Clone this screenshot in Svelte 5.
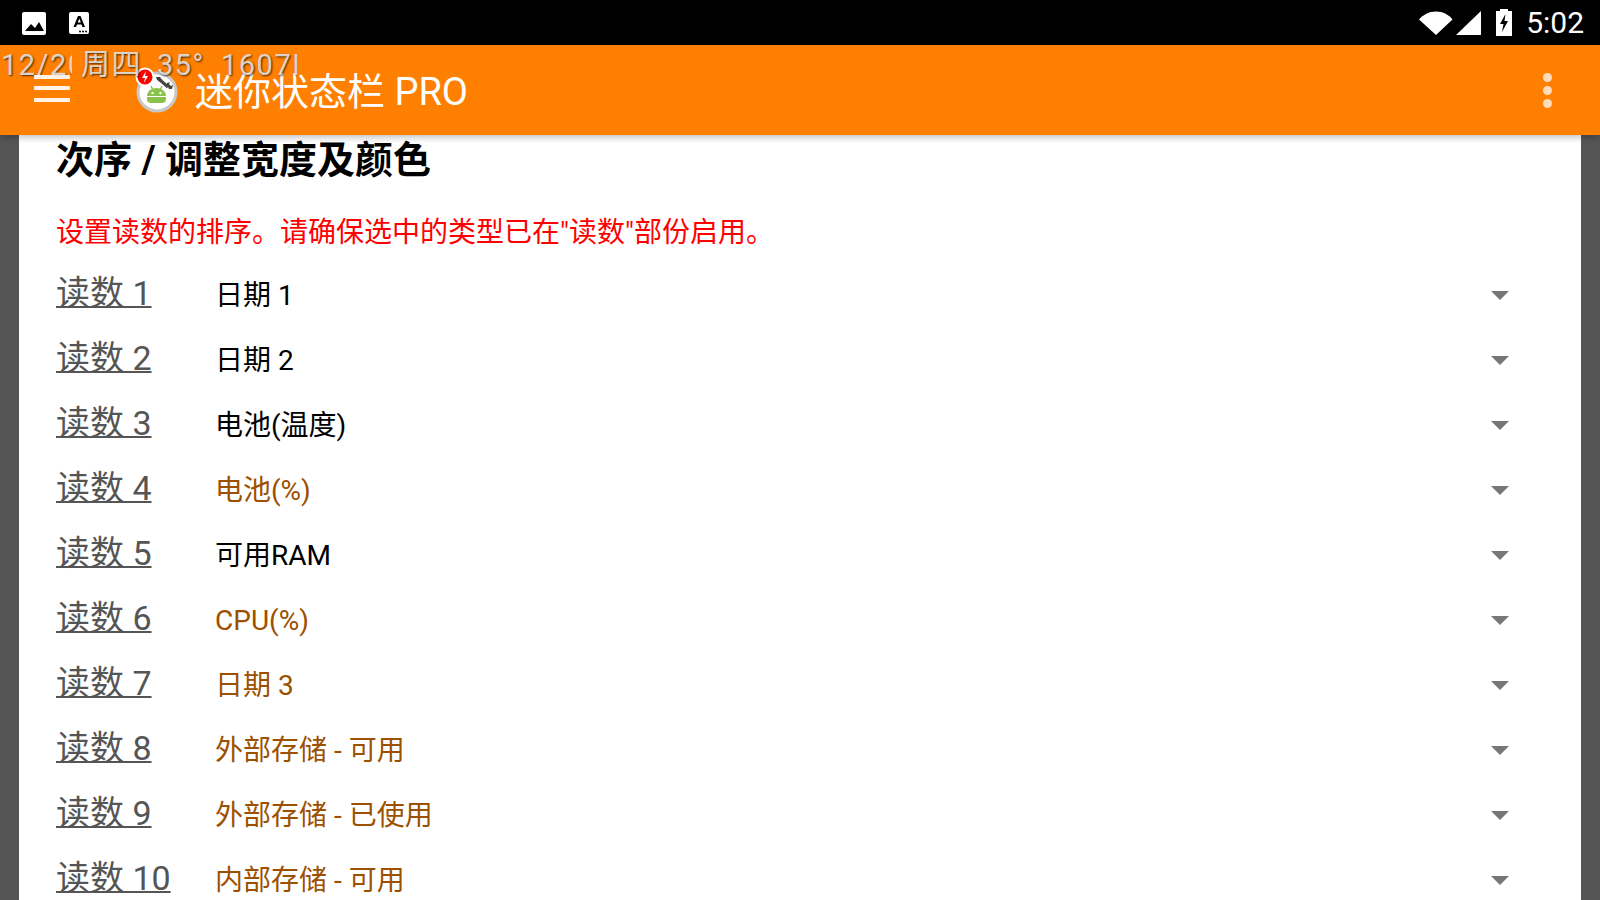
<script>
	const rows = [
		{ label: '读数 1', value: '日期 1', on: true },
		{ label: '读数 2', value: '日期 2', on: true },
		{ label: '读数 3', value: '电池(温度)', on: true },
		{ label: '读数 4', value: '电池(%)', on: false },
		{ label: '读数 5', value: '可用RAM', on: true },
		{ label: '读数 6', value: 'CPU(%)', on: false },
		{ label: '读数 7', value: '日期 3', on: false },
		{ label: '读数 8', value: '外部存储 - 可用', on: false },
		{ label: '读数 9', value: '外部存储 - 已使用', on: false },
		{ label: '读数 10', value: '内部存储 - 可用', on: false }
	];
	const readings = [
		{ text: '12/20', width: 71, gap: 0 },
		{ text: '周四', width: 76, gap: 9 },
		{ text: '35°', width: 64, gap: 0 },
		{ text: '1607K', width: 76, gap: 0 }
	];
</script>

<main class="page">
	<div class="statusbar">
		<div class="notifs">
			<svg width="26" height="24" viewBox="0 0 26 24">
				<rect x="1" y="1" width="24" height="23" rx="2" fill="#fff" />
				<path d="M4 20l6-7 4 4 4-6 5 9z" fill="#000" />
			</svg>
			<svg width="22" height="24" viewBox="0 0 22 24">
				<rect x="1" y="1" width="20" height="22" rx="2" fill="#fff" />
				<path d="M5.500 16L10 5h2.500L17 16h-2.600l-.9-2.500H9L8.100 16zM9.800 11.500h3L11.300 7.500z" fill="#000" />
				<circle cx="12" cy="20.500" r="1" fill="#000" /><circle cx="15" cy="20.500" r="1" fill="#000" /><circle cx="18" cy="20.500" r="1" fill="#000" />
			</svg>
		</div>
		<div class="sysicons">
			<svg class="wifi" width="34" height="26" viewBox="0 0 34 26">
				<path d="M0 9.500C4 5 10 1.500 17 1.500S30 5 33.500 9.500L17 25z" fill="#fff" />
			</svg>
			<svg class="signal" width="26" height="26" viewBox="0 0 26 26">
				<path d="M0 25L25 1v24z" fill="#fff" />
			</svg>
			<svg class="battery" width="18" height="27" viewBox="0 0 18 27">
				<path d="M5 0h8v2h4v25H1V2h4z" fill="#fff" />
				<path d="M10.500 5L5 15h3.500L7 23l6-11H9.500z" fill="#000" />
			</svg>
			<span class="clock">5:02</span>
		</div>
	</div>

	<header class="toolbar">
		<div class="readings">
			{#each readings as r}
				<span class="reading" style="width: {r.width}px; margin-left: {r.gap}px">{r.text}</span>
			{/each}
		</div>
		<button class="menu" aria-label="menu">
			<span></span><span></span><span></span>
		</button>
		<svg class="logo" width="46" height="52" viewBox="0 0 46 52">
			<circle cx="25" cy="29" r="19" fill="#fff" stroke="#c8c8c8" stroke-width="3" />
			<path d="M15 33a9.500 8 0 0 1 19 0z" fill="#8bc34a" />
			<path d="M15 34h19v3a4 4 0 0 1-4 3H19a4 4 0 0 1-4-3z" fill="#8bc34a" />
			<path d="M19 23l2 4M30 23l-2 4" stroke="#8bc34a" stroke-width="1.500" />
			<circle cx="20.500" cy="30" r="1.200" fill="#fff" /><circle cx="28.500" cy="30" r="1.200" fill="#fff" />
			<path d="M28 17l8 7" stroke="#444" stroke-width="3" />
			<path d="M35 22l2 4 3 0 1-4-2 1-2-2 1-2-3 1z" fill="#444" />
			<path d="M24 14l4 0 2 3-2 2-3-2z" fill="#444" />
			<circle cx="13" cy="14" r="8.500" fill="#f00" stroke="#fff" stroke-width="2" />
			<path d="M14 8l-4 7h3l-1 5 4-7h-3z" fill="#fff" />
		</svg>
		<h1>迷你状态栏 PRO</h1>
		<div class="more"><i></i><i></i><i></i></div>
	</header>

	<section class="card">
		<h2>次序 / 调整宽度及颜色</h2>
		<p class="note">设置读数的排序。请确保选中的类型已在"读数"部份启用。</p>
		{#each rows as row}
			<div class="row">
				<span class="label">{row.label}</span>
				<span class="value" class:off={!row.on}>{row.value}</span>
				<span class="arrow"></span>
			</div>
		{/each}
	</section>
</main>

<style>
	:global(body) {
		margin: 0;
	}

	.page {
		width: 1600px;
		height: 900px;
		overflow: hidden;
		background: #555;
		font-family: Roboto, "Noto Sans CJK SC", sans-serif;
		display: flex;
		flex-direction: column;
	}

	.statusbar {
		height: 45px;
		flex: none;
		background: #000;
		display: flex;
		align-items: center;
		justify-content: space-between;
		padding: 0 16px 0 21px;
	}

	.notifs {
		display: flex;
		gap: 21px;
		align-items: center;
	}

	.sysicons {
		display: flex;
		align-items: center;
	}

	.signal {
		margin-left: 3px;
	}

	.battery {
		margin-left: 13px;
	}

	.clock {
		margin-left: 13px;
		color: #fff;
		font-size: 30px;
	}

	.toolbar {
		height: 90px;
		flex: none;
		position: relative;
		z-index: 2;
		background: #ff8000;
		display: flex;
		align-items: center;
		box-sizing: border-box;
		box-shadow: 0 3px 6px rgba(0, 0, 0, 0.22);
	}

	.readings {
		position: absolute;
		left: 1px;
		top: 3px;
		display: flex;
	}

	.reading {
		overflow: hidden;
		white-space: nowrap;
		font-size: 29px;
		line-height: 34px;
		letter-spacing: 1.500px;
		color: rgba(235, 235, 235, 0.85);
		text-shadow: 1px 1px 2px rgba(0, 0, 0, 0.7);
	}

	.menu {
		width: 36px;
		height: 27px;
		margin-left: 34px;
		margin-top: -4px;
		padding: 0;
		border: none;
		background: none;
		display: flex;
		flex-direction: column;
		justify-content: space-between;
	}

	.menu span {
		height: 4px;
		background: #fff;
		opacity: 0.9;
	}

	.logo {
		margin-left: 62px;
		margin-top: -2px;
	}

	h1 {
		margin: -4px 0 0 17px;
		font-size: 38px;
		font-weight: 400;
		color: #fff;
	}

	.more {
		position: absolute;
		right: 48px;
		top: 28px;
		display: flex;
		flex-direction: column;
		gap: 4px;
	}

	.more i {
		width: 9px;
		height: 9px;
		border-radius: 50%;
		background: #ffdcbc;
	}

	.card {
		flex: 1;
		margin: 0 19px;
		padding: 0 37px;
		background: #fff;
	}

	h2 {
		margin: 0;
		padding-top: 1px;
		font-size: 38px;
		line-height: 48px;
		font-weight: 700;
		color: #000;
	}

	.note {
		margin: 30px 0 8px;
		font-size: 28px;
		line-height: 38px;
		color: #f00;
	}

	.row {
		height: 65px;
		display: flex;
		align-items: center;
	}

	.label {
		width: 159px;
		flex: none;
		margin-bottom: 4px;
		font-size: 34px;
		color: #555;
		text-decoration: underline;
		text-decoration-thickness: 2px;
	}

	.value {
		flex: 1;
		margin-top: 7px;
		font-size: 28px;
		line-height: 40px;
		color: #000;
	}

	.value.off {
		color: #9c5000;
	}

	.arrow {
		width: 0;
		height: 0;
		margin-top: 6px;
		margin-right: 35px;
		border-left: 9px solid transparent;
		border-right: 9px solid transparent;
		border-top: 9px solid #777;
	}
</style>
